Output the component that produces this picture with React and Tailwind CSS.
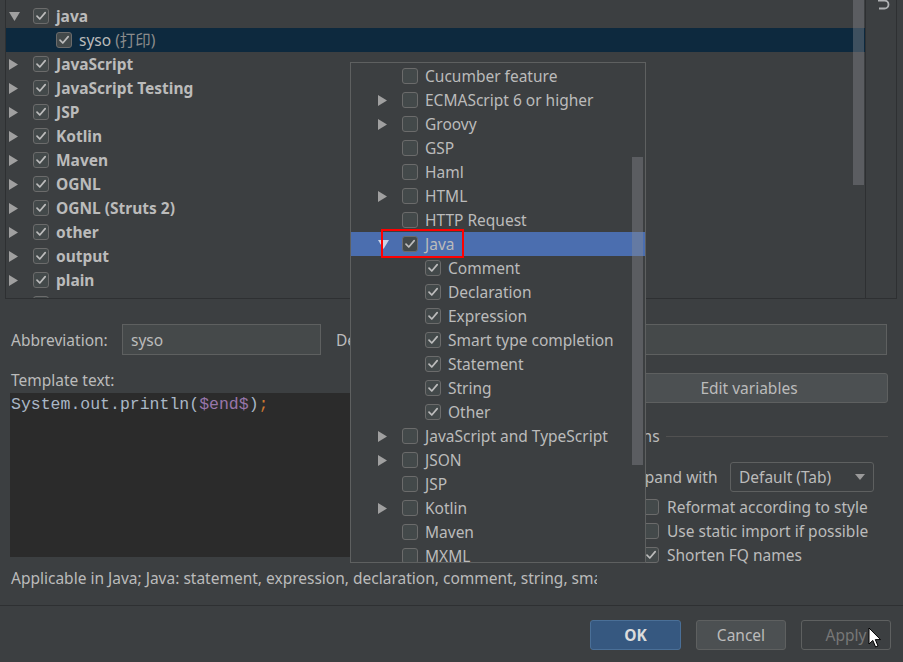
import React from "react";

const FONT = { fontFamily: '"Noto Sans", "Open Sans", "Noto Sans CJK SC", sans-serif' };

function Check({ checked, light }) {
  return (
    <div className="w-[16px] h-[16px] shrink-0 rounded-[3px] border border-[#6b6b6b] bg-[#43494a] flex items-center justify-center">
      {checked && (
        <svg width="12" height="12" viewBox="0 0 12 12">
          <path d="M2 6.2 L4.8 9 L10.2 2.6" stroke={light ? "#d0d0d0" : "#bcbcbc"} strokeWidth="1.7" fill="none" strokeLinecap="round" strokeLinejoin="round" />
        </svg>
      )}
    </div>
  );
}

function ArrowRight() {
  return (
    <svg width="9" height="11" viewBox="0 0 9 11">
      <polygon points="0,0 9,5.5 0,11" fill="#a0a0a0" />
    </svg>
  );
}

function ArrowDown({ color = "#a0a0a0" }) {
  return (
    <svg width="11" height="9" viewBox="0 0 11 9">
      <polygon points="0,0 11,0 5.5,9" fill={color} />
    </svg>
  );
}

function TreeRow({ arrow, label, bold = true, checked = true }) {
  return (
    <div className="h-[24px] flex items-center pl-[3px]">
      <div className="w-[24px] flex items-center">
        {arrow === "right" && <ArrowRight />}
        {arrow === "down" && <ArrowDown />}
      </div>
      <Check checked={checked} />
      {label && (
        <span className={"ml-[7px] pt-[2px] text-[15.5px] text-[#bbbbbb] whitespace-nowrap " + (bold ? "font-bold" : "")}>{label}</span>
      )}
    </div>
  );
}

function PopRow({ arrow, label, checked = false, child = false, selected = false }) {
  return (
    <div className={"h-[24px] flex items-center " + (child ? "pl-[74px]" : "pl-[27px]") + (selected ? " bg-[#4b6eaf]" : "")}>
      {!child && (
        <div className="w-[24px] flex items-center">
          {arrow === "right" && <ArrowRight />}
          {arrow === "down" && <ArrowDown color="#c9d3e6" />}
        </div>
      )}
      <Check checked={checked} />
      <span className="ml-[7px] pt-[2px] text-[15.5px] text-[#bbbbbb] whitespace-nowrap">{label}</span>
    </div>
  );
}

export default function App() {
  const tree = [
    ["right", "JavaScript"],
    ["right", "JavaScript Testing"],
    ["right", "JSP"],
    ["right", "Kotlin"],
    ["right", "Maven"],
    ["right", "OGNL"],
    ["right", "OGNL (Struts 2)"],
    ["right", "other"],
    ["right", "output"],
    ["right", "plain"],
  ];
  const popTop = [
    [null, "Cucumber feature"],
    ["right", "ECMAScript 6 or higher"],
    ["right", "Groovy"],
    [null, "GSP"],
    [null, "Haml"],
    ["right", "HTML"],
    [null, "HTTP Request"],
  ];
  const javaKids = ["Comment", "Declaration", "Expression", "Smart type completion", "Statement", "String", "Other"];
  const popBottom = [
    ["right", "JavaScript and TypeScript"],
    ["right", "JSON"],
    [null, "JSP"],
    ["right", "Kotlin"],
    [null, "Maven"],
    [null, "MXML"],
  ];

  return (
    <div className="w-[903px] h-[662px] bg-[#3c3f41] relative overflow-hidden text-[#bbbbbb] text-[15.5px]" style={FONT}>
      {/* top tree area */}
      <div className="h-[299px] flex pl-[5px] pr-[6px]">
        <div className="flex-1 flex border-l border-r border-b border-[#2e3032]">
          <div className="flex-1 relative overflow-hidden">
            <div className="mt-[-20px]">
              <TreeRow arrow="right" label="" />
              <TreeRow arrow="down" label="java" />
              <div className="h-[24px] flex items-center pl-[50px] bg-[#0d293e]">
                <Check checked />
                <span className="ml-[7px] pt-[2px] text-[15.5px] text-[#bbbbbb] whitespace-nowrap">
                  syso <span className="text-[#8c8c8c]">(打印)</span>
                </span>
              </div>
              {tree.map(([a, l]) => (
                <TreeRow key={l} arrow={a} label={l} />
              ))}
              <TreeRow arrow="right" label="" />
            </div>
            <div className="absolute right-[1px] top-0 w-[11px] h-[185px] bg-[#8a8d90]/40" />
          </div>
          <div className="w-[31px] border-l border-[#2e3032] relative">
            <svg className="absolute left-[9px] top-[-4px]" width="16" height="16" viewBox="0 0 16 16">
              <path d="M3 4.5 H9.5 A4 4 0 0 1 9.5 12.5 H4" stroke="#afb1b3" strokeWidth="1.8" fill="none" />
            </svg>
          </div>
        </div>
      </div>

      {/* abbreviation row */}
      <div className="mt-[25px] h-[31px] flex items-center pl-[11px] pr-[16px]">
        <span className="w-[111px] pt-[2px]">Abbreviation:</span>
        <div className="w-[199px] h-[31px] bg-[#45494a] border border-[#5e6060] flex items-center px-[8px]">
          <span className="pt-[2px]">syso</span>
        </div>
        <span className="ml-[15px] w-[94px] pt-[2px]">Description:</span>
        <div className="flex-1 h-[31px] bg-[#45494a] border border-[#5e6060]" />
      </div>

      {/* main two columns */}
      <div className="mt-[15px] flex pl-[10px] pr-[15px]">
        <div className="w-[587px] flex flex-col">
          <div className="h-[20px] flex items-center pl-[1px]"><span className="pt-[2px]">Template text:</span></div>
          <div className="mt-[3px] h-[164px] bg-[#2b2b2b] pl-[1px] pt-[2px]">
            <div className="text-[16.5px] leading-[20px] text-[#a9b7c6] whitespace-nowrap" style={{ fontFamily: '"Liberation Mono", monospace' }}>
              System.out.println(<span className="text-[#9876aa]">$end$</span>)<span className="text-[#cc7832]">;</span>
            </div>
          </div>
          <div className="mt-[11px] h-[20px] flex items-center pl-[1px] whitespace-nowrap overflow-hidden">
            <span className="pt-[2px]">Applicable in Java; Java: statement, expression, declaration, comment, string, sma</span>
          </div>
        </div>
        <div className="flex-1 ml-[3px] pt-[3px] flex flex-col">
          <div className="h-[30px] rounded-[3px] bg-[#4c5052] border border-[#5e6060] flex items-center justify-center">
            <span className="ml-[10px] pt-[2px]">Edit variables</span>
          </div>
          <div className="mt-[23px] h-[20px] flex items-center">
            <span className="ml-[2px] pt-[2px]">Options</span>
            <div className="flex-1 ml-[6px] h-px bg-[#515151]" />
          </div>
          <div className="mt-[16px] h-[30px] flex items-center">
            <span className="ml-[28px] w-[102px] pt-[2px]">Expand with</span>
            <div className="w-[144px] h-[30px] rounded-[3px] border border-[#5e6060] bg-[#3c3f41] flex items-center pl-[8px] pr-[8px]">
              <span className="flex-1 pt-[2px]">Default (Tab)</span>
              <svg width="10" height="6" viewBox="0 0 10 6"><polygon points="0,0 10,0 5,6" fill="#9a9a9a" /></svg>
            </div>
          </div>
          <div className="mt-[3px] flex flex-col pl-[43px]">
            <div className="h-[24px] flex items-center"><Check /><span className="ml-[8px] pt-[2px]">Reformat according to style</span></div>
            <div className="h-[24px] flex items-center"><Check /><span className="ml-[8px] pt-[2px]">Use static import if possible</span></div>
            <div className="h-[23px] flex items-center"><Check checked /><span className="ml-[8px] pt-[2px]">Shorten FQ names</span></div>
          </div>
        </div>
      </div>

      {/* separator + buttons */}
      <div className="mt-[17px] border-t border-[#2e3032] pt-[14px] flex justify-end pr-[12px] gap-[15px]">
        <div className="w-[91px] h-[30px] rounded-[3px] bg-[#365880] border border-[#4a6f97] flex items-center justify-center font-bold text-[#dcdcdc]"><span className="pt-[2px]">OK</span></div>
        <div className="w-[90px] h-[30px] rounded-[3px] bg-[#4c5052] border border-[#5e6060] flex items-center justify-center"><span className="pt-[2px]">Cancel</span></div>
        <div className="w-[90px] h-[30px] rounded-[3px] border border-[#5e6060] flex items-center justify-center text-[#777777]"><span className="pt-[2px]">Apply</span></div>
      </div>

      {/* popup */}
      <div className="absolute left-[350px] top-[62px] w-[296px] h-[501px] border border-[#5e6060] bg-[#3c3f41] overflow-hidden">
        <div className="pt-[1px]">
          {popTop.map(([a, l]) => (
            <PopRow key={l} arrow={a} label={l} />
          ))}
          <PopRow arrow="down" label="Java" checked selected />
          {javaKids.map((l) => (
            <PopRow key={l} child label={l} checked />
          ))}
          {popBottom.map(([a, l]) => (
            <PopRow key={l} arrow={a} label={l} />
          ))}
        </div>
        <div className="absolute left-[281px] top-[94px] w-[11px] h-[308px] bg-[#8a8d90]/40" />
      </div>

      {/* red annotation box */}
      <div className="absolute left-[381px] top-[229px] w-[83px] h-[29px] border-2 border-[#ff0000]" />

      {/* mouse cursor */}
      <svg className="absolute left-[868px] top-[627px]" width="14" height="22" viewBox="0 0 14 22">
        <path d="M1 1 L1 17 L4.8 13.4 L7.6 20 L10 19 L7.3 12.6 L12.5 12.6 Z" fill="#ffffff" stroke="#000000" strokeWidth="1" strokeLinejoin="round" />
      </svg>
    </div>
  );
}
